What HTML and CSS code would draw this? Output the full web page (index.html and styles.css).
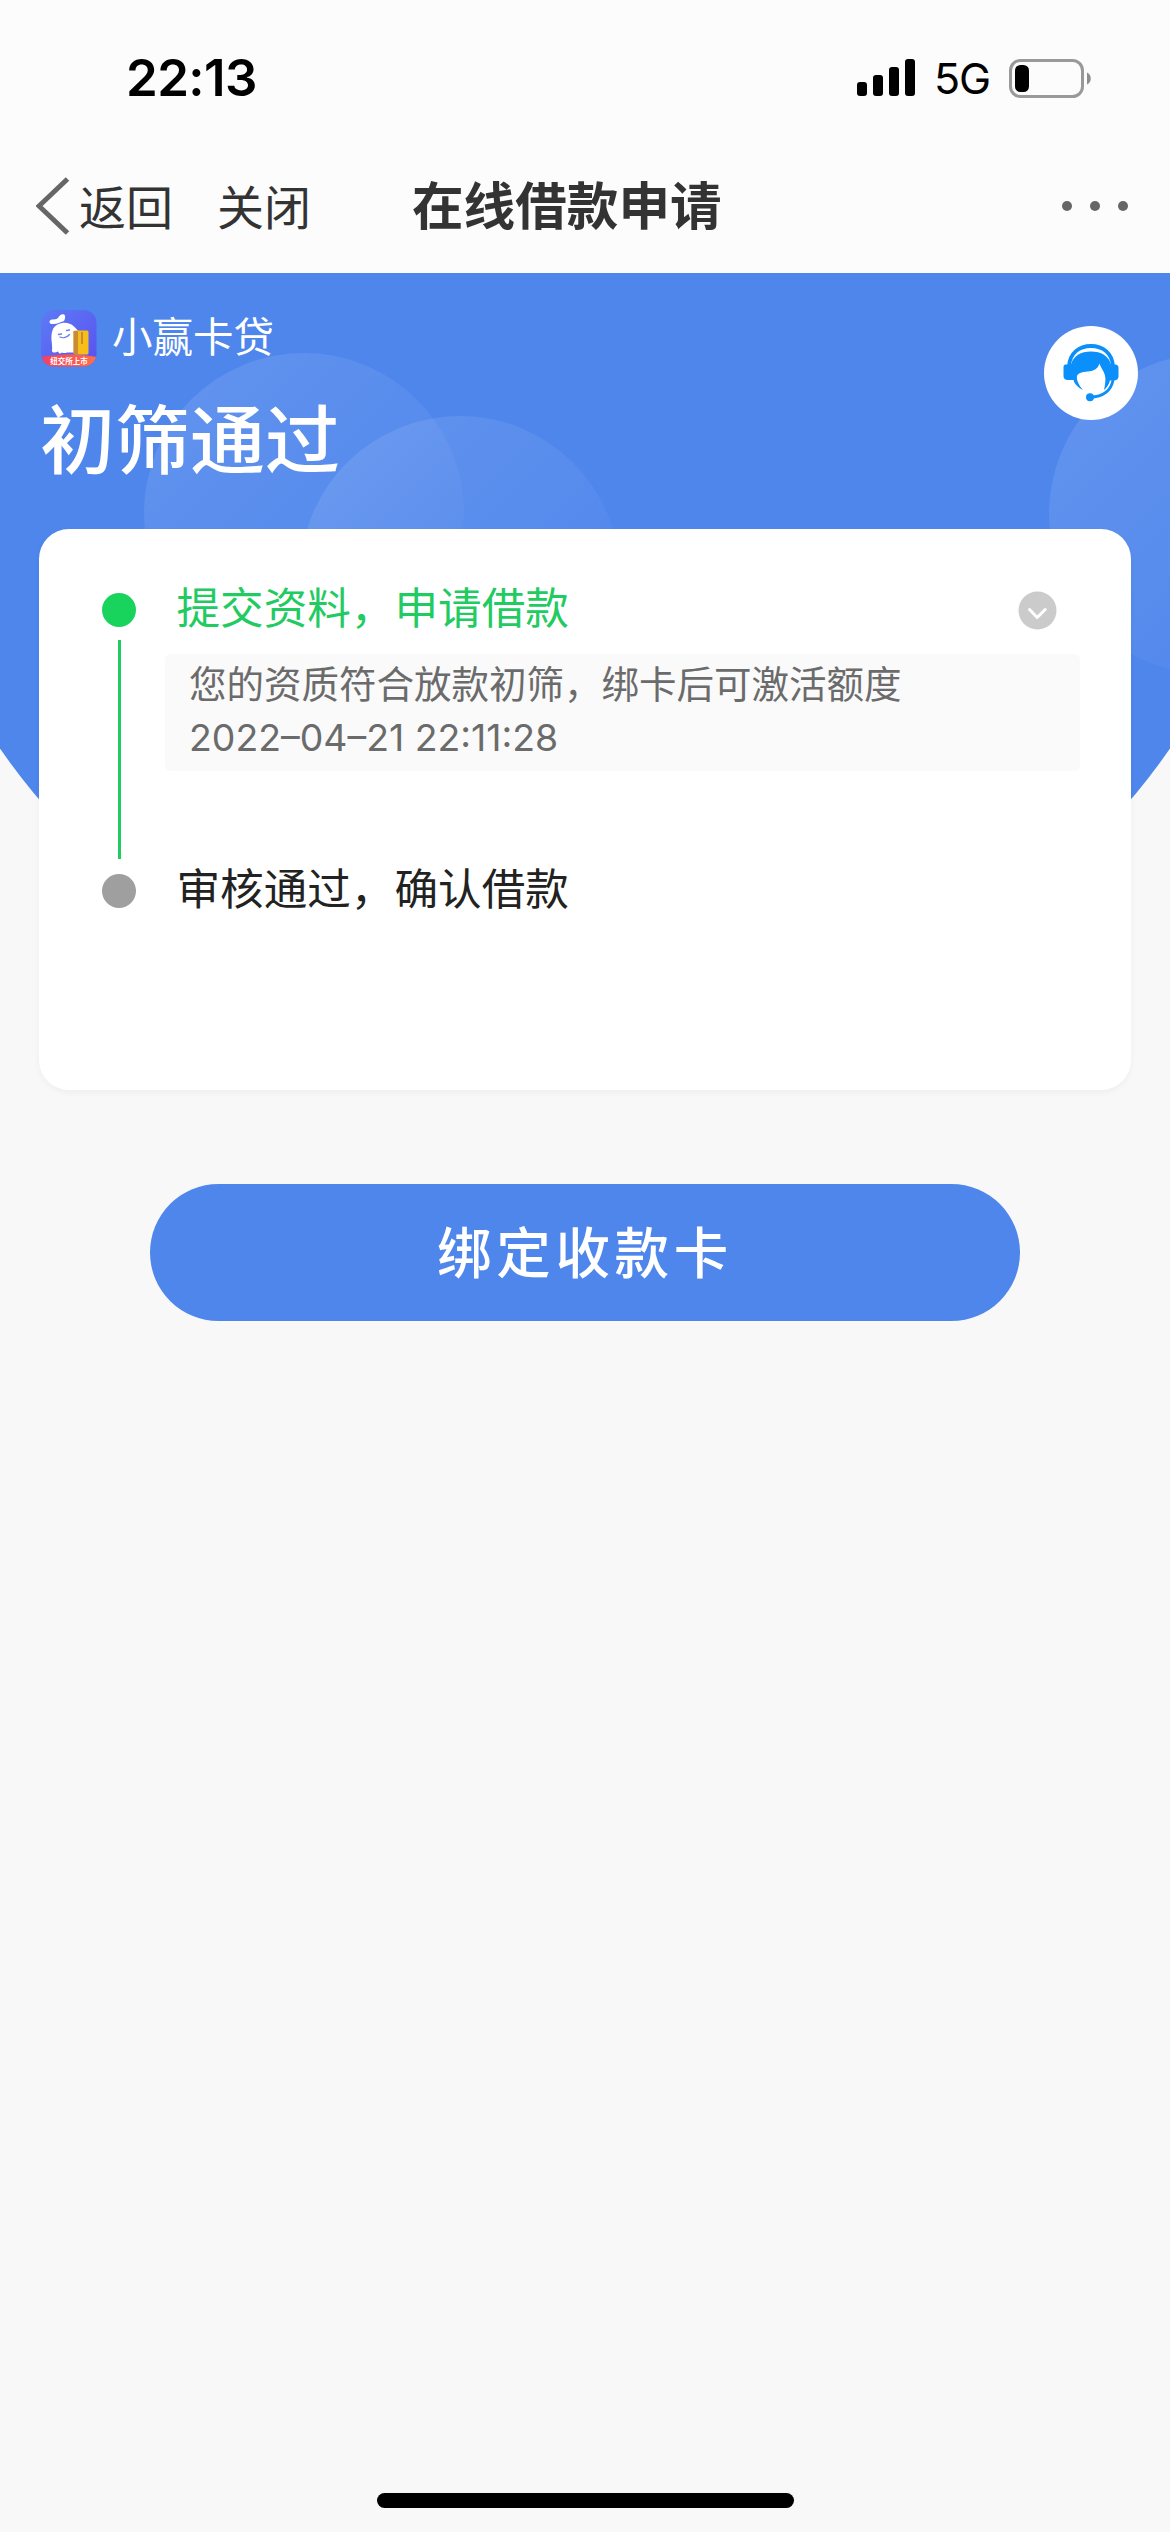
FILE: index.html
```html
<!DOCTYPE html>
<html lang="zh-CN">
<head>
<meta charset="utf-8">
<title>在线借款申请</title>
<link rel="stylesheet" href="styles.css">
</head>
<body>
<div class="screen">
  <header class="top">
    <div class="status">
      <span class="time">22:13</span>
      <div class="status-right">
        <svg class="signal" width="58" height="38" viewBox="0 0 58 38">
          <rect x="0" y="23" width="10" height="14" rx="3"/>
          <rect x="16" y="16" width="10" height="21" rx="3"/>
          <rect x="32" y="8" width="10" height="29" rx="3"/>
          <rect x="48" y="0" width="10" height="37" rx="3"/>
        </svg>
        <span class="network">5G</span>
        <svg class="battery" width="83" height="39" viewBox="0 0 83 39">
          <rect x="1.5" y="1.5" width="72" height="36" rx="10" fill="none" stroke="#999" stroke-width="3"/>
          <rect x="6" y="6" width="14" height="27" rx="5.5" fill="#000"/>
          <path d="M78 13.500c5 1.800 5 10.200 0 12z" fill="#8e8e8e"/>
        </svg>
      </div>
    </div>
    <nav class="nav">
      <div class="nav-left">
        <svg class="back" width="34" height="58" viewBox="0 0 34 58"><path d="M31.500 2L3 29l28.500 27" fill="none" stroke="#666" stroke-width="5"/></svg>
        <span class="nav-link">返回</span>
        <span class="nav-link close">关闭</span>
      </div>
      <h1 class="nav-title">在线借款申请</h1>
      <svg class="more" width="66" height="10" viewBox="0 0 66 10" fill="#666"><circle cx="5" cy="5" r="5"/><circle cx="33" cy="5" r="5"/><circle cx="61" cy="5" r="5"/></svg>
    </nav>
  </header>

  <main class="content">
    <svg class="backdrop" width="1170" height="782" viewBox="0 273 1170 782">
      <defs>
        <clipPath id="dome"><circle cx="585" cy="341" r="713"/></clipPath>
        <linearGradient id="bubble" x1="0.1" y1="0.15" x2="0.75" y2="0.8">
          <stop offset="0" stop-color="#fff" stop-opacity=".1"/>
          <stop offset="1" stop-color="#fff" stop-opacity=".02"/>
        </linearGradient>
      </defs>
      <g clip-path="url(#dome)">
        <rect x="0" y="273" width="1170" height="782" fill="#4f86ec"/>
        <circle cx="304" cy="513" r="160" fill="url(#bubble)"/>
        <circle cx="460" cy="576" r="160" fill="url(#bubble)"/>
        <circle cx="1209" cy="514" r="160" fill="url(#bubble)"/>
      </g>
    </svg>

    <section class="hero">
      <div>
        <div class="brand">
          <svg class="logo" width="56" height="57" viewBox="0 0 56 57">
            <defs>
              <linearGradient id="tile" x1="0" y1="0" x2="1" y2="1"><stop offset="0" stop-color="#5c7cf4"/><stop offset="1" stop-color="#5a4ff0"/></linearGradient>
              <linearGradient id="ribbon" x1="0" y1="0" x2="1" y2="0"><stop offset="0" stop-color="#f43e62"/><stop offset="1" stop-color="#ff7048"/></linearGradient>
              <clipPath id="tileClip"><rect width="55.500" height="56.500" rx="13"/></clipPath>
            </defs>
            <g clip-path="url(#tileClip)">
              <rect width="56" height="57" fill="url(#tile)"/>
              <path d="M9 10.500c2-2 5 0 8-2.500 1.500-3 4-4.500 6-3.500s1 5 0 6.500c-3 .5-7 3.500-11.500 3C8.500 14 8 12 9 10.500z" fill="#fff"/>
              <path d="M12 19c4-7 15-8.500 21-2.500 4 3.500 6.500 7 7 12v14H26c-1 .5-3 1-5 0-2 2-3 1-4-1-3 2-6.500 1-6-1 1-7-2.500-13 1-21.500z" fill="#fff"/>
              <path d="M17.500 24.500l3-.5M25.500 20.500l3-.5M19 27c3 1.500 7 .5 9.500-2.500" fill="none" stroke="#6e7cf2" stroke-width="1.300" stroke-linecap="round"/>
              <rect x="32.500" y="20.500" width="15" height="24" rx="1.500" fill="#f7bd18"/>
              <path d="M32.500 21h4.500v23h-4.500zM40 22h2v12h-2z" fill="#c98b35"/>
              <path d="M0 47Q28 41.500 56 47v10H0z" fill="url(#ribbon)"/>
              <text x="28" y="53.500" class="logo-text" text-anchor="middle">纽交所上市</text>
            </g>
          </svg>
          <span class="brand-name">小赢卡贷</span>
        </div>
        <h2 class="result">初筛通过</h2>
      </div>
      <div class="service">
        <svg width="58" height="58" viewBox="0 0 58 58">
          <path d="M7 22C8 9 17 2 29 2s21 7 22 20" fill="none" stroke="#0b90fb" stroke-width="3.800"/>
          <path d="M9 20.500C11 12 19 7.500 29 7.500S47 12 49 20.500H53c2 0 3.500 1 3.500 3v9c0 2.500-2 4-4.500 4h-4c-1 4-3 7-6 9.500 1-5 2-10 1-14.500-1-4.500-4-7-5.500-12-2 6-6 7.500-12 8-5 .5-9 1-10.500 4.500-.8 4 2 9.500 6 14-5-2.500-8.500-6-9.500-10H6c-3 0-4.500-1.500-4.500-4v-9c0-2 1-2.500 3-2.500z" fill="#0b90fb"/>
          <path d="M51 36c-1.500 9.500-9 17-23 17" fill="none" stroke="#0b90fb" stroke-width="2.800"/>
          <circle cx="28" cy="53.200" r="4" fill="#0b90fb"/>
        </svg>
      </div>
    </section>

    <section class="card">
      <div class="step">
        <div class="rail"><i class="dot"></i><i class="line"></i></div>
        <div class="step-body">
          <div class="step-head">
            <span class="step-title active">提交资料，申请借款</span>
            <svg width="39" height="39" viewBox="0 0 39 39"><circle cx="19.500" cy="19.500" r="19" fill="#cbcbcb"/><path d="M11.500 18.500l7.700 8 8-8" fill="none" stroke="#fff" stroke-width="3" stroke-linecap="round" stroke-linejoin="round"/></svg>
          </div>
          <div class="note">
            <p>您的资质符合放款初筛，绑卡后可激活额度</p>
            <p class="date">2022–04–21 22:11:28</p>
          </div>
        </div>
      </div>
      <div class="step">
        <div class="rail"><i class="dot pending"></i></div>
        <div class="step-body"><span class="step-title">审核通过，确认借款</span></div>
      </div>
    </section>

    <button class="bind">绑定收款卡</button>
  </main>
  <div class="home"></div>
</div>
</body>
</html>
```

FILE: styles.css
```css
* { box-sizing: border-box; }
body, h1, h2, p { margin: 0; }
body {
  width: 1170px;
  background: #f8f8f8;
  font-family: "Noto Sans CJK SC", sans-serif;
}
.screen {
  height: 2532px;
  display: flex;
  flex-direction: column;
  overflow: hidden;
}
.top {
  height: 273px;
  flex: none;
  background: #fcfcfc;
}
.status {
  height: 156px;
  padding: 0 78px 0 126px;
  display: flex;
  align-items: center;
  justify-content: space-between;
  font-family: Inter, sans-serif;
  color: #000;
}
.time {
  font-size: 51px;
  font-weight: 600;
  line-height: 60px;
  letter-spacing: -0.6px;
}
.status-right { display: flex; align-items: center; }
.network {
  width: 56px;
  margin: 0 19px;
  font-size: 43px;
  line-height: 50px;
  letter-spacing: -1.2px;
  white-space: nowrap;
}
.battery { display: block; }
.nav {
  height: 100px;
  padding: 0 42px 0 36px;
  display: grid;
  grid-template-columns: 376px 1fr 66px;
  align-items: center;
}
.nav-left { display: flex; align-items: center; }
.nav-link {
  margin: -3px 0 0 9px;
  font-size: 47px;
  line-height: 60px;
  color: #333;
}
.nav-link.close { margin-left: 44px; }
.nav-title {
  margin-top: -6px;
  font-size: 51.6px;
  font-weight: 700;
  line-height: 60px;
  color: #333;
}
.content {
  position: relative;
  flex: 1;
  padding: 0 39px;
}
.backdrop { position: absolute; top: 0; left: 0; }
.hero {
  position: relative;
  height: 256px;
  padding: 37px 0 0 2px;
  display: flex;
  justify-content: space-between;
  color: #fff;
}
.brand { display: flex; align-items: center; height: 57px; }
.brand-name {
  margin: -8px 0 0 15px;
  font-size: 40.5px;
  line-height: 57px;
}
.logo-text { font-size: 7.5px; fill: #fff; font-weight: 700; }
.result {
  margin: 24px 0 0 -1px;
  font-size: 75px;
  font-weight: 500;
  line-height: 90px;
}
.service {
  width: 94px;
  height: 94px;
  margin: 16px -7px 0 0;
  border-radius: 50%;
  background: #fff;
  display: grid;
  place-items: center;
}
.card {
  position: relative;
  height: 561px;
  padding: 49px 51px 0 63px;
  border-radius: 30px;
  background: #fff;
  box-shadow: 0 3px 6px rgba(0, 0, 0, .04);
}
.step { display: flex; height: 281px; }
.rail {
  width: 34px;
  padding-top: 15px;
  display: flex;
  flex-direction: column;
  align-items: center;
  gap: 13px;
}
.dot {
  width: 34px;
  height: 34px;
  border-radius: 50%;
  background: #18d45d;
}
.dot.pending { background: #9f9f9f; }
.line { width: 3px; height: 219px; background: #22cb62; }
.step-body { flex: 1; margin-left: 29px; }
.step-head {
  height: 64px;
  padding-right: 23px;
  display: flex;
  align-items: center;
  justify-content: space-between;
}
.step-title {
  display: block;
  margin-top: -2px;
  padding-left: 11.5px;
  font-size: 43.6px;
  line-height: 58px;
  color: #222;
}
.step-title.active { margin-top: -10px; color: #22cb62; }
.note {
  height: 117px;
  margin-top: 12px;
  padding: 1px 24px;
  border-radius: 6px;
  background: #fafafa;
  color: #6b6b6b;
  font-size: 37.5px;
  line-height: 53px;
}
.date {
  margin-top: 3px;
  font-family: Inter, sans-serif;
  font-size: 37.4px;
  font-weight: 400;
}
.bind {
  display: block;
  width: 870px;
  height: 137px;
  margin: 94px auto 0 111px;
  padding: 0 0 6px;
  border: 0;
  border-radius: 69px;
  background: #4f86ec;
  color: #fff;
  font-family: inherit;
  font-size: 54.5px;
  font-weight: 500;
  letter-spacing: 4.7px;
}
.home {
  flex: none;
  width: 417px;
  height: 15px;
  margin: 0 auto 24px 377px;
  border-radius: 8px;
  background: #000;
}
```
